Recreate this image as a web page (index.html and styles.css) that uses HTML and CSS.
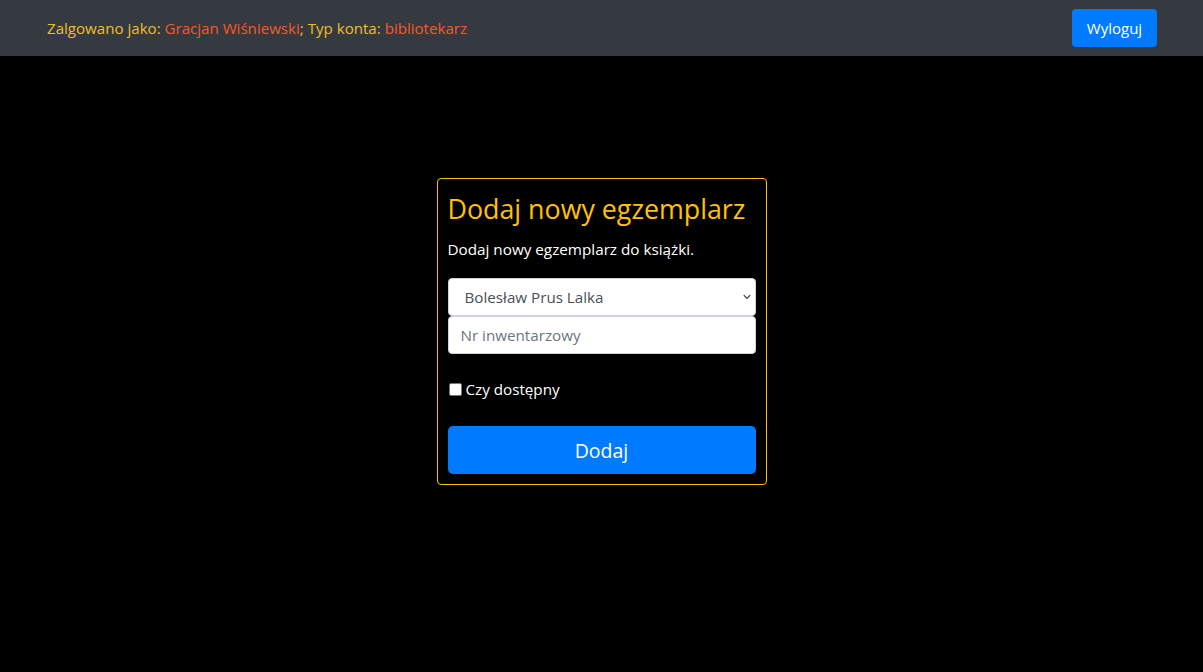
FILE: index.html
```html
<!DOCTYPE html>
<html lang="pl">
<head>
<meta charset="utf-8">
<title>Dodaj nowy egzemplarz</title>
<link rel="stylesheet" href="styles.css">
</head>
<body>
<nav class="navbar">
  <span class="who">Zalgowano jako: <span class="hl">Gracjan Wiśniewski</span>; Typ konta: <span class="hl">bibliotekarz</span></span>
  <button class="btn btn-nav" type="button">Wyloguj</button>
</nav>
<main class="main">
  <form class="card">
    <h2 class="card-title">Dodaj nowy egzemplarz</h2>
    <p class="card-text">Dodaj nowy egzemplarz do książki.</p>
    <div class="select-wrap">
      <select class="form-control select">
        <option>Bolesław Prus Lalka</option>
      </select>
      <svg class="chev" width="8" height="6" viewBox="0 0 8 6"><path d="M0.8 1.2 L4 4.4 L7.2 1.2" fill="none" stroke="#343a40" stroke-width="1.2"/></svg>
    </div>
    <input class="form-control input" type="text" placeholder="Nr inwentarzowy">
    <label class="check"><span class="box"></span>Czy dostępny</label>
    <button class="btn btn-lg" type="button">Dodaj</button>
  </form>
</main>
</body>
</html>
```

FILE: styles.css
```css
* { box-sizing: border-box; }
html, body { margin: 0; padding: 0; }
body {
  background: #000;
  font-family: "Open Sans", "Noto Sans", sans-serif;
  font-size: 15.2px;
  line-height: 1.5;
  color: #fff;
  height: 672px;
  overflow: hidden;
}
.navbar {
  height: 56px;
  background: #343a40;
  display: flex;
  align-items: center;
  justify-content: space-between;
  padding: 0 46px 0 47px;
}
.who { color: #f2bd25; font-size: 15.1px; }
.hl { color: #ff5525; }
.btn {
  border: none;
  background: #007bff;
  color: #fff;
  font-family: inherit;
  border-radius: 4px;
  cursor: pointer;
}
.btn-nav {
  height: 38px;
  width: 85px;
  font-size: 15px;
  padding: 0;
}
.main {
  display: flex;
  justify-content: center;
  padding-top: 122px;
}
.card {
  width: 330px;
  border: 1px solid #ffc107;
  border-radius: 4px;
  padding: 10px;
  display: flex;
  flex-direction: column;
}
.card-title {
  margin: 0;
  font-weight: 400;
  font-size: 26.8px;
  line-height: 40px;
  color: #ffc107;
}
.card-text {
  margin: 8px 0 17px 0;
  font-size: 15.25px;
  line-height: 24px;
}
.form-control {
  display: block;
  width: 100%;
  height: 38px;
  border: 1px solid #ced4da;
  border-radius: 4px;
  background: #fff;
  font-family: inherit;
  font-size: 15.2px;
  color: #495057;
  margin: 0;
}
.select-wrap { position: relative; }
.select {
  appearance: none;
  -webkit-appearance: none;
  padding: 0 24px 0 16px;
}
.chev { position: absolute; right: 5px; top: 16px; pointer-events: none; }
.input { padding: 0 12px; }
.input::placeholder { color: #6c757d; opacity: 1; }
.check {
  display: flex;
  align-items: center;
  margin-top: 23px;
  font-size: 15.2px;
  line-height: 24px;
  height: 24px;
}
.box {
  width: 13px;
  height: 13px;
  background: #fff;
  border: 1px solid #767676;
  border-radius: 2px;
  margin: 0 4px 0 1px;
}
.btn-lg {
  margin-top: 25px;
  height: 48px;
  width: 100%;
  font-size: 19.5px;
  border-radius: 5px;
}
```
